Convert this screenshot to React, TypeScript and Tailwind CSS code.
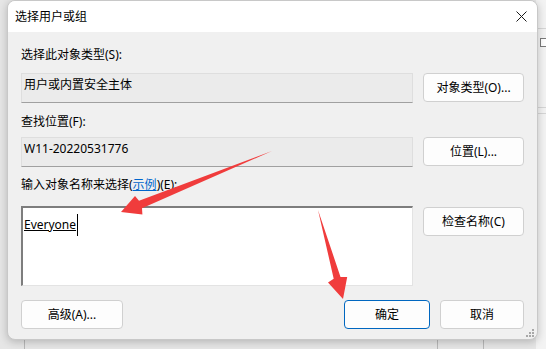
import React from 'react';
import clsx from 'clsx';

type BtnProps = { children: React.ReactNode; primary?: boolean; className?: string };

const Btn: React.FC<BtnProps> = ({ children, primary, className }) => (
  <button
    className={clsx(
      'h-[29px] rounded-[4px] border bg-[#fdfdfd] text-[12px] leading-[16px] text-black',
      primary ? 'border-[#0067c0]' : 'border-[#d0d0d0]',
      className
    )}
  >
    {children}
  </button>
);

const ReadField: React.FC<{ children: React.ReactNode }> = ({ children }) => (
  <div className="h-[30px] border border-[#dedede] border-b-[#a0a0a0] bg-[#ebebeb] pl-[2px] pt-[3px] text-[12px] leading-[16px] text-black">
    {children}
  </div>
);

// screenshot-tool arrows drawn over the dialog
const Arrows = () => (
  <svg className="pointer-events-none absolute left-0 top-0" width="546" height="349" viewBox="0 0 546 349">
    <polygon
      fill="#f03c3c"
      points="272,151 139,200.8 135,196 121,212 142.4,214.6 142,208.2"
    />
    <polygon
      fill="#f03c3c"
      points="318,210 340.5,276.9 347.2,277 343,299 328,282.4 333.7,278.7"
    />
  </svg>
);

export default function App() {
  return (
    <div className="relative h-[349px] w-[546px] overflow-hidden bg-[#e6e6e6] font-['Noto_Sans','Noto_Sans_CJK_SC',sans-serif]">
      {/* window behind, right side */}
      <div className="absolute right-0 top-0 h-full w-[10px] bg-[#f3f3f3]">
        <div className="mt-[28px] h-px w-full bg-[#d6d6d6]" />
        <div className="ml-[4px] mt-[9px] h-[9px] w-[9px] border border-[#7a7a7a] bg-white" />
        <div className="mt-[60px] h-px w-full bg-[#d6d6d6]" />
        <div className="mt-[5px] h-px w-full bg-[#d6d6d6]" />
      </div>
      {/* window behind, bottom strip */}
      <div className="absolute bottom-0 left-0 h-[9px] w-full">
        <div className="absolute left-[24px] top-0 h-full w-px bg-[#b8b8b8]" />
        <div className="absolute left-[437px] top-0 h-full w-px bg-[#b8b8b8]" />
        <div className="absolute left-[483px] top-0 h-full w-px bg-[#b8b8b8]" />
      </div>

      <div className="relative ml-[7px] flex h-[340px] w-[531px] flex-col overflow-hidden rounded-[8px] border border-[#c8c8c8] bg-[#f0f0f0] text-black shadow-[0_2px_8px_rgba(0,0,0,0.22)]">
        {/* title bar */}
        <div className="flex h-[31px] shrink-0 items-center justify-between bg-white pl-[7px] pr-[10px]">
          <span className="text-[12px] leading-[16px]">选择用户或组</span>
          <svg width="11" height="11" viewBox="0 0 11 11">
            <path d="M0.5 0.5 L10.5 10.5 M10.5 0.5 L0.5 10.5" stroke="#1a1a1a" strokeWidth="1" />
          </svg>
        </div>

        <div className="flex flex-1 flex-col pl-[13px] pr-[13px] pt-[15px]">
          <div className="grid grid-cols-[392px_101px] gap-x-[10px] text-[12px] leading-[16px]">
            <div className="col-span-2 h-[16px]">选择此对象类型(S):</div>
            <div className="mt-[10px]">
              <ReadField>用户或内置安全主体</ReadField>
            </div>
            <Btn className="mt-[10px]">对象类型(O)...</Btn>

            <div className="col-span-2 mt-[11px] h-[16px]">查找位置(F):</div>
            <div className="mt-[7px]">
              <ReadField>W11-20220531776</ReadField>
            </div>
            <Btn className="mt-[7px]">位置(L)...</Btn>

            <div className="col-span-2 mt-[10px] h-[16px]">
              输入对象名称来选择(<span className="text-[#0066cc] underline">示例</span>)(E):
            </div>
            <div className="mt-[13px] h-[80px] border-l-2 border-t-2 border-b border-r border-l-[#7d7d7d] border-t-[#7d7d7d] border-b-[#e3e3e3] border-r-[#e3e3e3] bg-white pl-[1px] pt-[6px]">
              <div className="flex items-center">
                <span className="underline">Everyone</span>
                <span className="ml-[1px] h-[22px] w-px bg-black" />
              </div>
            </div>
            <Btn className="mt-[14px] self-start">检查名称(C)</Btn>
          </div>

          <div className="mt-[14px] flex">
            <Btn className="w-[102px]">高级(A)...</Btn>
            <Btn primary className="ml-auto w-[86px]">确定</Btn>
            <Btn className="ml-[10px] w-[84px]">取消</Btn>
          </div>
        </div>

        {/* resize grip */}
        <svg className="absolute bottom-[2px] right-[3px]" width="9" height="9" viewBox="0 0 9 9">
          <rect x="7" y="1" width="2" height="2" fill="#a8a8a8" />
          <rect x="4" y="4" width="2" height="2" fill="#a8a8a8" />
          <rect x="7" y="4" width="2" height="2" fill="#a8a8a8" />
          <rect x="1" y="7" width="2" height="2" fill="#a8a8a8" />
          <rect x="4" y="7" width="2" height="2" fill="#a8a8a8" />
          <rect x="7" y="7" width="2" height="2" fill="#a8a8a8" />
        </svg>
      </div>

      <Arrows />
    </div>
  );
}
